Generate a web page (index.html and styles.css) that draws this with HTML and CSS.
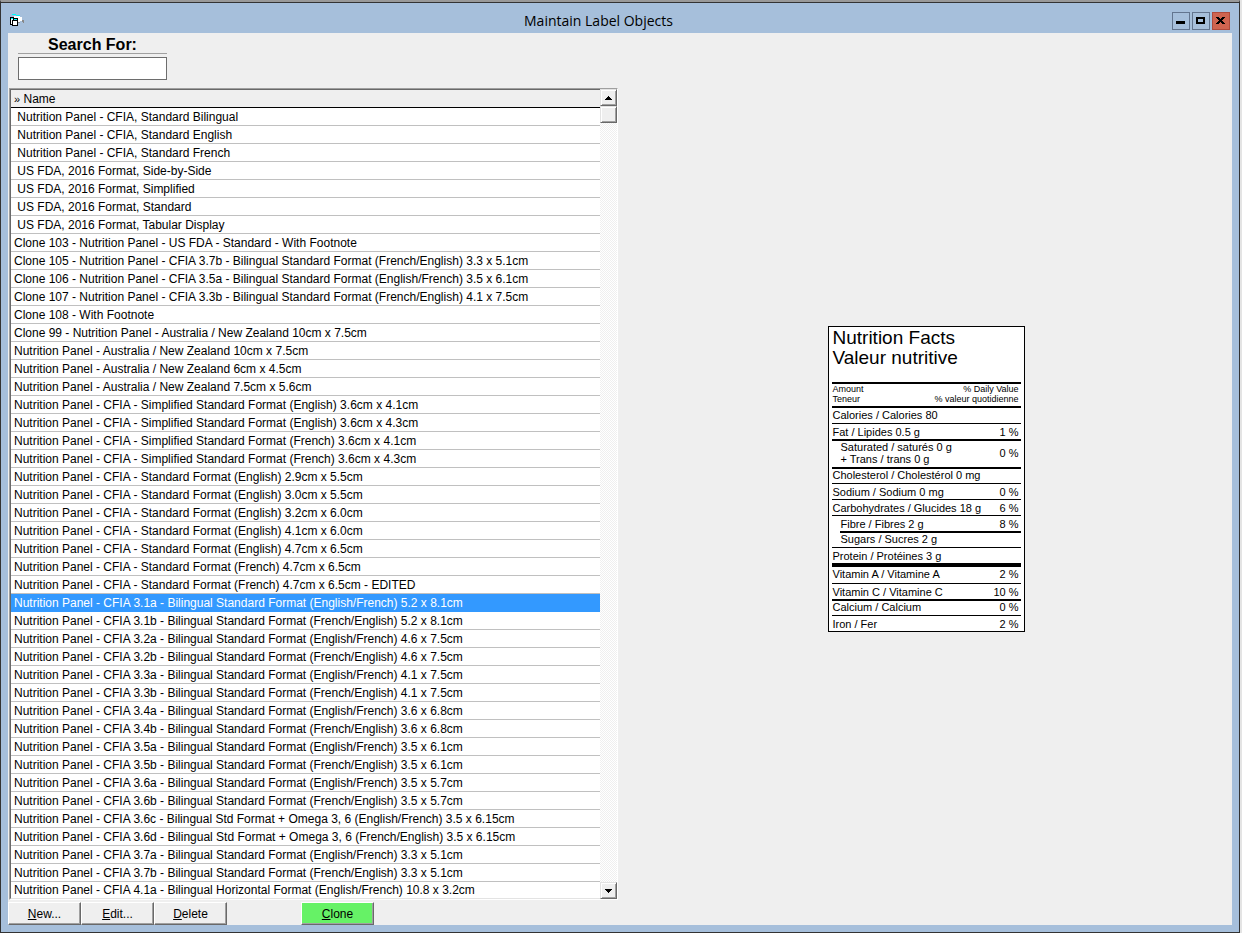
FILE: index.html
```html
<!DOCTYPE html>
<html lang="en">
<head>
<meta charset="utf-8">
<title>Maintain Label Objects</title>
<link rel="stylesheet" href="styles.css">
</head>
<body>
<div class="window">
  <header class="titlebar">
    <svg class="app-icon" width="16" height="16" viewBox="0 0 16 16" shape-rendering="crispEdges" aria-hidden="true">
      <path d="M5 3h6v1h2v4h-2v1h-1v1H8V5H5z" fill="#fff"/>
      <path d="M3 1h4v1H3zM7 2h4v1H7z" fill="#0ff"/>
      <path d="M13 7h2v3h-1V9h-1zM9 9h2v1H9z" fill="#888"/>
      <path d="M1 4h4v1h4v8H3v-1H1z" fill="#000"/>
      <path d="M2 6h2v1H3v4H2zM4 8h4v4H4z" fill="#fff"/>
      <path d="M2 5h2v1H2zM5 6h3v1H5z" fill="#0ff"/>
    </svg>
    <h1 class="title">Maintain Label Objects</h1>
    <div class="window-buttons">
      <button class="win-btn" type="button" aria-label="Minimize"><svg width="16" height="16" viewBox="0 0 16 16" shape-rendering="crispEdges"><path d="M3 8h9v3H3z"/></svg></button>
      <button class="win-btn" type="button" aria-label="Maximize"><svg width="16" height="16" viewBox="0 0 16 16" shape-rendering="crispEdges"><path d="M3 4h9v7H3zM5 6v3h5V6z" fill-rule="evenodd"/></svg></button>
      <button class="win-btn win-close" type="button" aria-label="Close"><svg width="16" height="16" viewBox="0 0 16 16" shape-rendering="crispEdges"><path d="M3 4h3v1h1v1h1V5h1V4h3v1h-1v1h-1v1H9v1h1v1h1v1h1v1H9v-1H8V9H7v1H6v1H3v-1h1V9h1V8h1V7H5V6H4V5H3z"/></svg></button>
    </div>
  </header>
  <main class="content">
    <section class="browser">
      <div class="search">
        <label class="search-label" for="search">Search For:</label>
        <input class="search-input" id="search" type="text">
      </div>
      <div class="list">
        <div class="list-view">
          <table class="grid">
            <thead><tr><th><span class="mark">»</span> Name</th></tr></thead>
            <tbody>
              <tr><td> Nutrition Panel - CFIA, Standard Bilingual</td></tr>
              <tr><td> Nutrition Panel - CFIA, Standard English</td></tr>
              <tr><td> Nutrition Panel - CFIA, Standard French</td></tr>
              <tr><td> US FDA, 2016 Format, Side-by-Side</td></tr>
              <tr><td> US FDA, 2016 Format, Simplified</td></tr>
              <tr><td> US FDA, 2016 Format, Standard</td></tr>
              <tr><td> US FDA, 2016 Format, Tabular Display</td></tr>
              <tr><td>Clone 103 - Nutrition Panel - US FDA - Standard - With Footnote</td></tr>
              <tr><td>Clone 105 - Nutrition Panel - CFIA 3.7b - Bilingual Standard Format (French/English) 3.3 x 5.1cm</td></tr>
              <tr><td>Clone 106 - Nutrition Panel - CFIA 3.5a - Bilingual Standard Format (English/French) 3.5 x 6.1cm</td></tr>
              <tr><td>Clone 107 - Nutrition Panel - CFIA 3.3b - Bilingual Standard Format (French/English) 4.1 x 7.5cm</td></tr>
              <tr><td>Clone 108 - With Footnote</td></tr>
              <tr><td>Clone 99 - Nutrition Panel - Australia / New Zealand 10cm x 7.5cm</td></tr>
              <tr><td>Nutrition Panel - Australia / New Zealand 10cm x 7.5cm</td></tr>
              <tr><td>Nutrition Panel - Australia / New Zealand 6cm x 4.5cm</td></tr>
              <tr><td>Nutrition Panel - Australia / New Zealand 7.5cm x 5.6cm</td></tr>
              <tr><td>Nutrition Panel - CFIA - Simplified Standard Format (English) 3.6cm x 4.1cm</td></tr>
              <tr><td>Nutrition Panel - CFIA - Simplified Standard Format (English) 3.6cm x 4.3cm</td></tr>
              <tr><td>Nutrition Panel - CFIA - Simplified Standard Format (French) 3.6cm x 4.1cm</td></tr>
              <tr><td>Nutrition Panel - CFIA - Simplified Standard Format (French) 3.6cm x 4.3cm</td></tr>
              <tr><td>Nutrition Panel - CFIA - Standard Format (English) 2.9cm x 5.5cm</td></tr>
              <tr><td>Nutrition Panel - CFIA - Standard Format (English) 3.0cm x 5.5cm</td></tr>
              <tr><td>Nutrition Panel - CFIA - Standard Format (English) 3.2cm x 6.0cm</td></tr>
              <tr><td>Nutrition Panel - CFIA - Standard Format (English) 4.1cm x 6.0cm</td></tr>
              <tr><td>Nutrition Panel - CFIA - Standard Format (English) 4.7cm x 6.5cm</td></tr>
              <tr><td>Nutrition Panel - CFIA - Standard Format (French) 4.7cm x 6.5cm</td></tr>
              <tr><td>Nutrition Panel - CFIA - Standard Format (French) 4.7cm x 6.5cm - EDITED</td></tr>
              <tr class="selected"><td>Nutrition Panel - CFIA 3.1a - Bilingual Standard Format (English/French) 5.2 x 8.1cm</td></tr>
              <tr><td>Nutrition Panel - CFIA 3.1b - Bilingual Standard Format (French/English) 5.2 x 8.1cm</td></tr>
              <tr><td>Nutrition Panel - CFIA 3.2a - Bilingual Standard Format (English/French) 4.6 x 7.5cm</td></tr>
              <tr><td>Nutrition Panel - CFIA 3.2b - Bilingual Standard Format (French/English) 4.6 x 7.5cm</td></tr>
              <tr><td>Nutrition Panel - CFIA 3.3a - Bilingual Standard Format (English/French) 4.1 x 7.5cm</td></tr>
              <tr><td>Nutrition Panel - CFIA 3.3b - Bilingual Standard Format (French/English) 4.1 x 7.5cm</td></tr>
              <tr><td>Nutrition Panel - CFIA 3.4a - Bilingual Standard Format (English/French) 3.6 x 6.8cm</td></tr>
              <tr><td>Nutrition Panel - CFIA 3.4b - Bilingual Standard Format (French/English) 3.6 x 6.8cm</td></tr>
              <tr><td>Nutrition Panel - CFIA 3.5a - Bilingual Standard Format (English/French) 3.5 x 6.1cm</td></tr>
              <tr><td>Nutrition Panel - CFIA 3.5b - Bilingual Standard Format (French/English) 3.5 x 6.1cm</td></tr>
              <tr><td>Nutrition Panel - CFIA 3.6a - Bilingual Standard Format (English/French) 3.5 x 5.7cm</td></tr>
              <tr><td>Nutrition Panel - CFIA 3.6b - Bilingual Standard Format (French/English) 3.5 x 5.7cm</td></tr>
              <tr><td>Nutrition Panel - CFIA 3.6c - Bilingual Std Format + Omega 3, 6 (English/French) 3.5 x 6.15cm</td></tr>
              <tr><td>Nutrition Panel - CFIA 3.6d - Bilingual Std Format + Omega 3, 6 (French/English) 3.5 x 6.15cm</td></tr>
              <tr><td>Nutrition Panel - CFIA 3.7a - Bilingual Standard Format (English/French) 3.3 x 5.1cm</td></tr>
              <tr><td>Nutrition Panel - CFIA 3.7b - Bilingual Standard Format (French/English) 3.3 x 5.1cm</td></tr>
              <tr><td>Nutrition Panel - CFIA 4.1a - Bilingual Horizontal Format (English/French) 10.8 x 3.2cm</td></tr>
            </tbody>
          </table>
        </div>
        <div class="scrollbar">
          <button class="scroll-btn" type="button" aria-label="Scroll up"><svg width="7" height="4" viewBox="0 0 7 4" shape-rendering="crispEdges"><path d="M3 0h1v1h1v1h1v1h1v1H0V3h1V2h1V1h1z"/></svg></button>
          <div class="thumb"></div>
          <button class="scroll-btn scroll-down" type="button" aria-label="Scroll down"><svg width="7" height="4" viewBox="0 0 7 4" shape-rendering="crispEdges"><path d="M0 0h7v1H6v1H5v1H4v1H3V3H2V2H1V1H0z"/></svg></button>
        </div>
      </div>
      <div class="actions">
        <button class="action" type="button"><u>N</u>ew...</button>
        <button class="action" type="button"><u>E</u>dit...</button>
        <button class="action" type="button"><u>D</u>elete</button>
        <button class="action clone" type="button"><u>C</u>lone</button>
      </div>
    </section>
    <section class="preview">
      <article class="facts">
        <h2 class="facts-title">Nutrition Facts<br>Valeur nutritive</h2>
        <div class="fact legend medium"><span>Amount<br>Teneur</span><span class="pct">% Daily Value<br>% valeur quotidienne</span></div>
        <div class="fact medium calories"><span>Calories / Calories 80</span></div>
        <div class="fact"><span>Fat / Lipides 0.5 g</span><span class="pct">1 %</span></div>
        <div class="fact medium double"><span class="sub">Saturated / saturés 0 g<br>+ Trans / trans 0 g</span><span class="pct">0 %</span></div>
        <div class="fact medium"><span>Cholesterol / Cholestérol 0 mg</span></div>
        <div class="fact"><span>Sodium / Sodium 0 mg</span><span class="pct">0 %</span></div>
        <div class="fact"><span>Carbohydrates / Glucides 18 g</span><span class="pct">6 %</span></div>
        <div class="fact"><span class="sub">Fibre / Fibres 2 g</span><span class="pct">8 %</span></div>
        <div class="fact medium inset"><span>Sugars / Sucres 2 g</span></div>
        <div class="fact"><span>Protein / Protéines 3 g</span></div>
        <div class="fact heavy"><span>Vitamin A / Vitamine A</span><span class="pct">2 %</span></div>
        <div class="fact"><span>Vitamin C / Vitamine C</span><span class="pct">10 %</span></div>
        <div class="fact medium"><span>Calcium / Calcium</span><span class="pct">0 %</span></div>
        <div class="fact"><span>Iron / Fer</span><span class="pct">2 %</span></div>
      </article>
    </section>
  </main>
</div>
</body>
</html>
```
FILE: styles.css
```css
* { box-sizing: border-box; }

body {
  margin: 0;
  background: #e4e4e4;
  font-family: "Liberation Sans", Arial, sans-serif;
  font-size: 12px;
  color: #000;
}

button, input { font: inherit; color: inherit; border-radius: 0; }

.window {
  display: flex;
  flex-direction: column;
  min-height: 100vh;
  margin-right: 2px;
  padding: 0 7px 7px;
  background: #a6bfdb;
  border: 1px solid #333;
  border-top: 2px solid #999;
}

.titlebar {
  display: grid;
  grid-template-columns: 18px 1fr 60px;
  align-items: center;
  height: 31px;
  margin: 0 -7px;
  padding: 6px 9px 0 8px;
  border-top: 1px solid #333;
}

.title {
  margin: 0;
  font: 14px/20px "Open Sans", "Noto Sans", sans-serif;
  text-align: center;
}

.window-buttons {
  display: flex;
  gap: 2px;
  justify-content: flex-end;
}

.win-btn {
  width: 18px;
  height: 18px;
  padding: 0;
  background: #a6bfdb;
  border: 1px solid #63758f;
}

.win-btn svg { display: block; }

.win-close { background: #cf6450; border-color: #b04a3c; }

.content {
  flex: 1;
  display: grid;
  grid-template-columns: 1fr 1fr;
  background: #efefef;
}

.browser {
  display: flex;
  flex-direction: column;
  min-width: 0;
}

.search {
  display: flex;
  flex-direction: column;
  gap: 3px;
  width: 149px;
  margin: 3px 0 8px 10px;
}

.search-label {
  font-size: 16px;
  font-weight: bold;
  line-height: 17px;
  text-align: center;
  border-bottom: 1px solid #a0a0a0;
}

.search-input {
  width: 100%;
  height: 23px;
  background: #fff;
  border: 1px solid #6d6d6d;
}

.list {
  flex: 1;
  display: flex;
  margin: 0 2px 0 1px;
  border: 1px solid;
  border-color: #9f9f9f #fff #fff #9f9f9f;
}

.list-view {
  flex: 1;
  min-width: 0;
  overflow: hidden;
  background: #fff;
  border: 1px solid #696969;
  border-width: 1px 0 0 1px;
  border-bottom: 1px solid #e3e3e3;
}

.grid {
  width: 100%;
  border-collapse: separate;
  border-spacing: 0;
  line-height: 16px;
}

.grid th {
  height: 18px;
  padding: 1px 3px 0;
  font-weight: normal;
  text-align: left;
  background: #efefef;
  border-bottom: 1px solid #000;
}

.mark { font-size: 11px; }

.grid td {
  height: 18px;
  padding: 1px 3px 0;
  white-space: pre;
  border-bottom: 1px solid #c0c0c0;
}

.grid tr:last-child td { border-bottom: 0; }
.grid tbody tr:last-child td { height: 16px; line-height: 15px; }

.selected td { color: #fff; background: #3399ff; border-color: #3399ff; }

.scrollbar {
  display: flex;
  flex-direction: column;
  width: 17px;
  background: repeating-conic-gradient(#efefef 0 25%, #fff 0 50%) 0 0 / 2px 2px;
}

.scroll-btn, .thumb {
  width: 17px;
  height: 17px;
  padding: 0;
  background: #efefef;
  border: 1px solid;
  border-color: #e3e3e3 #696969 #696969 #e3e3e3;
  box-shadow: inset 1px 1px #fff, inset -1px -1px #a0a0a0;
}

.scroll-btn { display: grid; place-items: center; }

.scroll-down { margin-top: auto; }

.actions {
  display: flex;
  padding: 2px 0 0;
}

.action {
  width: 73px;
  height: 23px;
  padding: 0;
  background: #efefef;
  border: 1px solid;
  border-color: #fff #696969 #696969 #fff;
  box-shadow: inset -1px -1px #a0a0a0;
}

.clone { margin-left: 74px; background: #66f266; }

.preview {
  display: grid;
  place-items: center;
}

.facts {
  width: 197px;
  padding: 1px 3px 0;
  font-size: 11px;
  line-height: 12px;
  background: #fff;
  border: 1px solid #000;
}

.facts-title {
  margin: 0 0 14px;
  padding-left: 1px;
  font-size: 19px;
  font-weight: normal;
  line-height: 20px;
}

.fact {
  display: flex;
  align-items: center;
  justify-content: space-between;
  height: 16px;
  padding: 0 2px 0 1px;
  border-top: 1px solid #000;
}

.pct { text-align: right; }
.sub { padding-left: 8px; }
.medium { border-top-width: 2px; padding-bottom: 2px; }
.legend { height: 24px; font-size: 9px; line-height: 10px; }
.calories { height: 17px; }
.double { height: 28px; }
.inset { margin-left: 8px; }
.heavy { height: 20px; border-top-width: 4px; padding-bottom: 2px; }
```
